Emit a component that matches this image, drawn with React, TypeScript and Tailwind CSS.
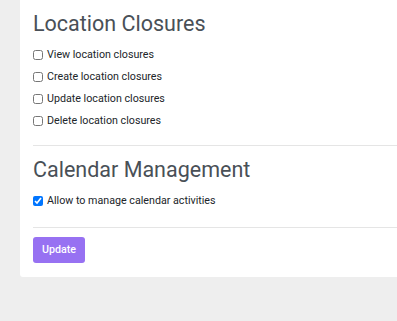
export default function App() {
  const closures = [
    'View location closures',
    'Create location closures',
    'Update location closures',
    'Delete location closures',
  ];

  return (
    <div className="min-h-[321px] w-[397px] overflow-hidden bg-[#eeeeee] font-['Roboto',sans-serif]">
      <div className="ml-[20px] rounded-bl-[3px] bg-white pl-[13px] pt-[11px] pb-[14px]">
        {/* Location Closures */}
        <h2 className="text-[21.5px] leading-[1.2] font-normal text-[#495057]">Location Closures</h2>
        <div className="mt-[7px]">
          {closures.map((label) => (
            <label key={label} className="flex h-[22px] items-center gap-[4px] text-[10.7px] text-[#212529]">
              <input type="checkbox" className="m-0 h-[10px] w-[10px]" />
              <span>{label}</span>
            </label>
          ))}
        </div>

        <hr className="mt-[13px] border-0 border-t border-[#e5e5e5]" />

        {/* Calendar Management */}
        <h2 className="mt-[11px] text-[21.5px] leading-[1.2] font-normal text-[#495057]">Calendar Management</h2>
        <label className="mt-[7px] flex h-[22px] items-center gap-[4px] text-[10.7px] text-[#212529]">
          <input type="checkbox" defaultChecked className="m-0 h-[10px] w-[10px]" />
          <span>Allow to manage calendar activities</span>
        </label>

        <hr className="mt-[15px] border-0 border-t border-[#e5e5e5]" />

        <button className="mt-[9px] h-[26px] rounded-[3px] bg-[#9771f2] px-[9px] text-[10.7px] font-medium text-white">
          Update
        </button>
      </div>
    </div>
  );
}
